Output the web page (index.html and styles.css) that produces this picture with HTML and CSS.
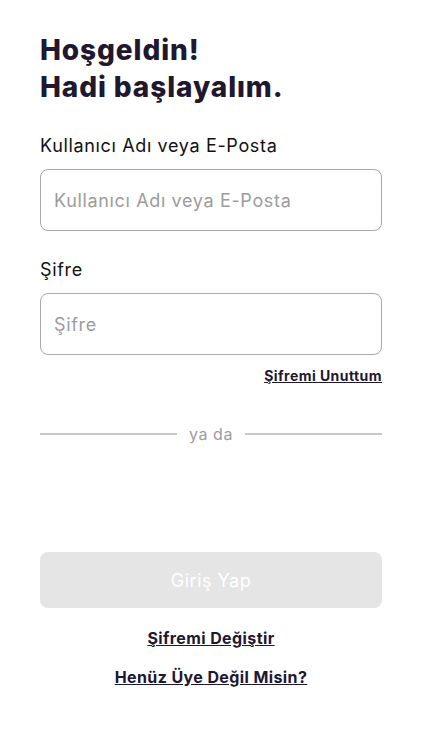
FILE: index.html
```html
<!DOCTYPE html>
<html lang="tr">
<head>
  <meta charset="UTF-8" />
  <meta name="viewport" content="width=device-width, initial-scale=1.0"/>
  <title>Giriş</title>
  <link rel="stylesheet" href="styles.css">
</head>
<body>

<div class="login">
  <h1 class="title">Hoşgeldin!<br>Hadi başlayalım.</h1>

  <label class="label" for="user">Kullanıcı Adı veya E-Posta</label>
  <input class="field" id="user" type="text" placeholder="Kullanıcı Adı veya E-Posta">

  <label class="label" for="pass">Şifre</label>
  <input class="field" id="pass" type="password" placeholder="Şifre">

  <div class="forgot"><a href="#">Şifremi Unuttum</a></div>

  <div class="divider">
    <span class="line"></span>
    <span class="or">ya da</span>
    <span class="line"></span>
  </div>

  <button class="submit" disabled>Giriş Yap</button>

  <div class="links">
    <a href="#">Şifremi Değiştir</a>
    <a href="#">Henüz Üye Değil Misin?</a>
  </div>
</div>

</body>
</html>
```

FILE: styles.css
```css
body {
  margin: 0;
  padding: 0;
  background: #fff;
  font-family: Inter, "Open Sans", sans-serif;
  color: #1e1430;
}

.login {
  display: flex;
  flex-direction: column;
  padding: 32px 40px 0;
}

.title {
  margin: 0 0 28px;
  font-size: 28px;
  line-height: 37px;
  font-weight: 800;
  letter-spacing: 0.9px;
  color: #21172f;
}

.label {
  font-size: 18px;
  line-height: 24px;
  letter-spacing: 0.65px;
  color: #111;
  margin-bottom: 11px;
}

.field {
  box-sizing: border-box;
  height: 62px;
  margin: 0 0 27px;
  padding: 0 13px;
  border: 1px solid #a9a9a9;
  border-radius: 8px;
  font-family: inherit;
  font-size: 18px;
  letter-spacing: 0.65px;
  color: #222;
  outline: none;
}

.field::placeholder {
  color: #9c9c9c;
}

#pass {
  margin-bottom: 12px;
}

.forgot {
  text-align: right;
  font-size: 14px;
  font-weight: 700;
  letter-spacing: 0.45px;
}

.forgot a,
.links a {
  color: #21172f;
  text-decoration: underline;
}

.divider {
  display: flex;
  align-items: center;
  gap: 12px;
  margin-top: 40px;
}

.line {
  flex: 1;
  height: 2px;
  background: #c8c8c8;
}

.or {
  font-size: 16px;
  letter-spacing: 0.6px;
  color: #9c9c9c;
}

.submit {
  margin-top: 108px;
  height: 56px;
  border: none;
  border-radius: 8px;
  background: #e5e5e5;
  color: #fff;
  font-family: inherit;
  font-size: 18px;
  letter-spacing: 0.5px;
}

.links {
  display: flex;
  flex-direction: column;
  align-items: center;
  gap: 17px;
  margin-top: 19px;
  font-size: 16px;
  font-weight: 700;
  line-height: 22px;
  letter-spacing: 0.4px;
}
```
